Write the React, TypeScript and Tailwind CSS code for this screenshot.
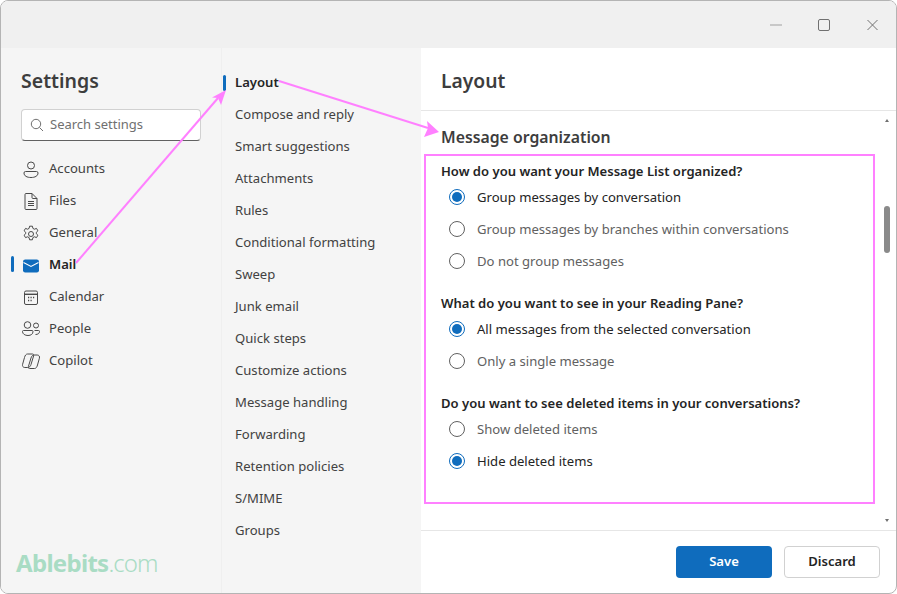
import { ReactNode } from "react";

const font = { fontFamily: '"Noto Sans", sans-serif' };

function Ico({ children }: { children: ReactNode }) {
  return (
    <svg width="20" height="20" viewBox="-1 -2 20 20" fill="none" stroke="#4a4a4a" strokeWidth="1" className="shrink-0">
      {children}
    </svg>
  );
}

const leftNav: { label: string; icon: ReactNode; active?: boolean }[] = [
  {
    label: "Accounts",
    icon: (
      <Ico>
        <circle cx="9" cy="4.500" r="3.500" />
        <path d="M3.500 10.500h11a1.500 1.500 0 0 1 1.500 1.500c0 3-3 4.500-7 4.500s-7-1.500-7-4.500a1.500 1.500 0 0 1 1.500-1.500z" />
      </Ico>
    ),
  },
  {
    label: "Files",
    icon: (
      <Ico>
        <path d="M5 .5h5l5 5v10a1 1 0 0 1-1 1H4a1 1 0 0 1-1-1V1.500a1 1 0 0 1 1-1z" />
        <path d="M10 .5v4a1 1 0 0 0 1 1h4M6 8.500h6M6 10.500h6M6 12.500h6" />
      </Ico>
    ),
  },
  {
    label: "General",
    icon: (
      <Ico>
        <circle cx="9" cy="9" r="2.500" />
        <path d="M7.600 1.200h2.800l.5 2.200 1.500.8 2.100-.8 1.400 2.400-1.600 1.500v1.400l1.600 1.500-1.400 2.400-2.100-.8-1.500.8-.5 2.200H7.600l-.5-2.200-1.500-.8-2.100.8-1.400-2.400 1.600-1.500V7.300L2.100 5.800l1.400-2.400 2.100.8 1.500-.8z" />
      </Ico>
    ),
  },
  {
    label: "Mail",
    active: true,
    icon: (
      <svg width="20" height="20" viewBox="-1 -2 20 20" className="shrink-0">
        <rect x="1" y="2.500" width="16" height="13" rx="2.200" fill="#0f6cbd" />
        <path d="M1.500 5.500 9 9.500l7.500-4" fill="none" stroke="#fff" strokeWidth="1.100" />
      </svg>
    ),
  },
  {
    label: "Calendar",
    icon: (
      <Ico>
        <rect x="2.500" y="2" width="13" height="13.500" rx="1.500" />
        <path d="M2.500 5.300h13" strokeWidth="1.400" />
        <path d="M6 8.500h1.200M8.500 8.500h1.200M11 8.500h1.200M6 11.500h1.200M8.500 11.500h1.200" strokeWidth="1.300" />
      </Ico>
    ),
  },
  {
    label: "People",
    icon: (
      <Ico>
        <circle cx="5.500" cy="4" r="3.300" />
        <circle cx="14" cy="4.500" r="2.500" />
        <path d="M1.500 9.500h8.500a1 1 0 0 1 1 1c0 2.500-2 4-5 4S.5 13 .5 10.500a1 1 0 0 1 1-1z" />
        <path d="M12.500 9.500h4a1 1 0 0 1 1 1c0 1.800-1.500 3-4 3" />
      </Ico>
    ),
  },
  {
    label: "Copilot",
    icon: (
      <Ico>
        <path d="M5.500 1h5c1.200 0 1.500.8 1.100 2L9 11.500c-.5 1.800-1.500 3-3.500 3H2.800C1 14.500.1 13 .6 11.300L2.500 4.500C3 2.500 4 1 5.500 1z" />
        <path d="M12.500 15.500h-5c-1.200 0-1.500-.8-1.100-2L9 5c.5-1.800 1.500-3 3.500-3h2.700c1.800 0 2.700 1.500 2.200 3.200L15.500 12c-.5 2-1.500 3.500-3 3.500z" />
      </Ico>
    ),
  },
];

const midNav = [
  "Layout",
  "Compose and reply",
  "Smart suggestions",
  "Attachments",
  "Rules",
  "Conditional formatting",
  "Sweep",
  "Junk email",
  "Quick steps",
  "Customize actions",
  "Message handling",
  "Forwarding",
  "Retention policies",
  "S/MIME",
  "Groups",
];

const groups = [
  {
    q: "How do you want your Message List organized?",
    opts: [
      { t: "Group messages by conversation", on: true },
      { t: "Group messages by branches within conversations" },
      { t: "Do not group messages" },
    ],
  },
  {
    q: "What do you want to see in your Reading Pane?",
    opts: [{ t: "All messages from the selected conversation", on: true }, { t: "Only a single message" }],
  },
  {
    q: "Do you want to see deleted items in your conversations?",
    opts: [{ t: "Show deleted items" }, { t: "Hide deleted items", on: true }],
  },
];

function Radio({ on }: { on?: boolean }) {
  if (on) {
    return (
      <span className="w-4 h-4 rounded-full border border-[#0f6cbd] flex items-center justify-center shrink-0">
        <span className="w-[10px] h-[10px] rounded-full bg-[#0f6cbd]" />
      </span>
    );
  }
  return <span className="w-4 h-4 rounded-full border border-[#616161] shrink-0" />;
}

export default function App() {
  return (
    <div style={font} className="relative w-[897px] h-[594px] bg-white overflow-hidden text-[#424242]">
      <div className="w-full h-full flex flex-col border border-[#b4b4b4] rounded-lg overflow-hidden bg-white">
        {/* title bar */}
        <div className="h-[47px] bg-[#f0f0f0] flex items-center justify-end shrink-0 pt-[1px]">
          <svg width="108" height="16" viewBox="0 0 108 16" fill="none" className="mr-[18px]">
            <path d="M0 8h12" stroke="#a0a0a0" strokeWidth="1.200" />
            <rect x="48.500" y="2.500" width="11" height="11" rx="1.500" stroke="#707070" />
            <path d="M97.500 3l10 10M107.500 3l-10 10" stroke="#707070" />
          </svg>
        </div>

        <div className="flex-1 flex min-h-0">
          {/* left pane */}
          <div className="w-[220px] bg-[#f5f5f5] flex flex-col shrink-0 pl-[20px] relative">
            <div className="text-[19.500px] leading-[28px] font-semibold mt-[19px] text-[#3d3d3d]">Settings</div>
            <div className="mt-[14px] w-[180px] h-[32px] bg-white border border-[#d1d1d1] border-b-[#616161] rounded flex items-center pl-[8px] gap-[6px]">
              <svg width="14" height="14" viewBox="0 0 14 14" fill="none" stroke="#707070">
                <circle cx="6" cy="6" r="4.700" />
                <path d="M9.500 9.500 13 13" />
              </svg>
              <span className="text-[13px] text-[#707070]">Search settings</span>
            </div>
            <div className="mt-[12px] flex flex-col">
              {leftNav.map((n) => (
                <div key={n.label} className="h-[32px] flex items-center gap-[8px] relative">
                  {n.active && <span className="absolute left-[-10px] top-[7px] w-[3px] h-[16px] rounded bg-[#0f6cbd]" />}
                  {n.icon}
                  <span className={n.active ? "text-[13.100px] font-semibold text-[#242424]" : "text-[13.100px]"}>{n.label}</span>
                </div>
              ))}
            </div>
            <div className="mt-auto mb-[14px] ml-[-5px] text-[24px] leading-[32px] text-[#a9dcc4] tracking-[-0.7px]">
              <span className="font-bold">Ablebits</span>
              <span className="font-light tracking-[-1px]">.com</span>
            </div>
          </div>

          {/* middle pane */}
          <div className="w-[200px] bg-[#f5f5f5] border-l border-[#efefef] flex flex-col shrink-0 pt-[19px] pl-[13px]">
            {midNav.map((label, i) => (
              <div key={label} className="h-[32px] flex items-center relative">
                {i === 0 && <span className="absolute left-[-12px] top-[8px] w-[3px] h-[16px] rounded bg-[#0f6cbd]" />}
                <span className={i === 0 ? "text-[13.100px] font-semibold text-[#242424]" : "text-[13.100px]"}>{label}</span>
              </div>
            ))}
          </div>

          {/* right pane */}
          <div className="flex-1 flex flex-col min-w-0">
            <div className="h-[63px] border-b border-[#e6e6e6] flex items-center pl-[20px] pt-[4px] shrink-0">
              <span className="text-[19.300px] font-semibold text-[#3d3d3d]">Layout</span>
            </div>
            <div className="flex-1 flex min-h-0">
              <div className="flex-1 pl-[20px] pt-[14px] min-w-0">
                <div className="text-[15.800px] leading-[24px] font-semibold text-[#3d3d3d]">Message organization</div>
                {groups.map((g, gi) => (
                  <div key={g.q} className={gi === 0 ? "mt-[12px]" : "mt-[16px]"}>
                    <div className="text-[13.050px] leading-[20px] font-semibold text-[#242424]">{g.q}</div>
                    <div className="flex flex-col">
                      {g.opts.map((o) => (
                        <div key={o.t} className="h-[32px] flex items-center gap-[12px] pl-[8px]">
                          <Radio on={o.on} />
                          <span className={o.on ? "mt-[2px] text-[13.100px] text-[#242424]" : "mt-[2px] text-[13.100px] text-[#616161]"}>{o.t}</span>
                        </div>
                      ))}
                    </div>
                  </div>
                ))}
              </div>
              {/* scrollbar */}
              <div className="w-[20px] flex flex-col items-center pl-[2px] shrink-0">
                <span className="mt-[8px] w-0 h-0 border-l-[2px] border-r-[2px] border-b-[3px] border-l-transparent border-r-transparent border-b-[#707070]" />
                <span className="mt-[84px] w-[6px] h-[47px] rounded-full bg-[#8a8a8a]" />
                <span className="mt-auto mb-[8px] w-0 h-0 border-l-[2px] border-r-[2px] border-t-[3px] border-l-transparent border-r-transparent border-t-[#707070]" />
              </div>
            </div>
            <div className="h-[63px] border-t border-[#e6e6e6] flex items-center justify-end gap-[12px] pr-[16px] shrink-0">
              <button className="w-[96px] h-[32px] rounded bg-[#0f6cbd] text-white text-[13.100px] font-semibold">Save</button>
              <button className="w-[96px] h-[32px] rounded bg-white border border-[#d1d1d1] text-[#242424] text-[13.100px] font-semibold">Discard</button>
            </div>
          </div>
        </div>
      </div>

      {/* annotations over the screenshot */}
      <div className="absolute left-[424px] top-[154px] w-[451px] h-[350px] border-2 border-[#ff80ff]" />
      <svg className="absolute left-0 top-0 pointer-events-none" width="897" height="594" viewBox="0 0 897 594" fill="none">
        <path d="M76 263 218 98" stroke="#ff80ff" strokeWidth="2" />
        <path d="M226 90 212 97.500 218 98 221 105z" fill="#ff80ff" />
        <path d="M279 81 428 128" stroke="#ff80ff" strokeWidth="2" />
        <path d="M439 132 427 121 428 128 424 137z" fill="#ff80ff" />
      </svg>
    </div>
  );
}
